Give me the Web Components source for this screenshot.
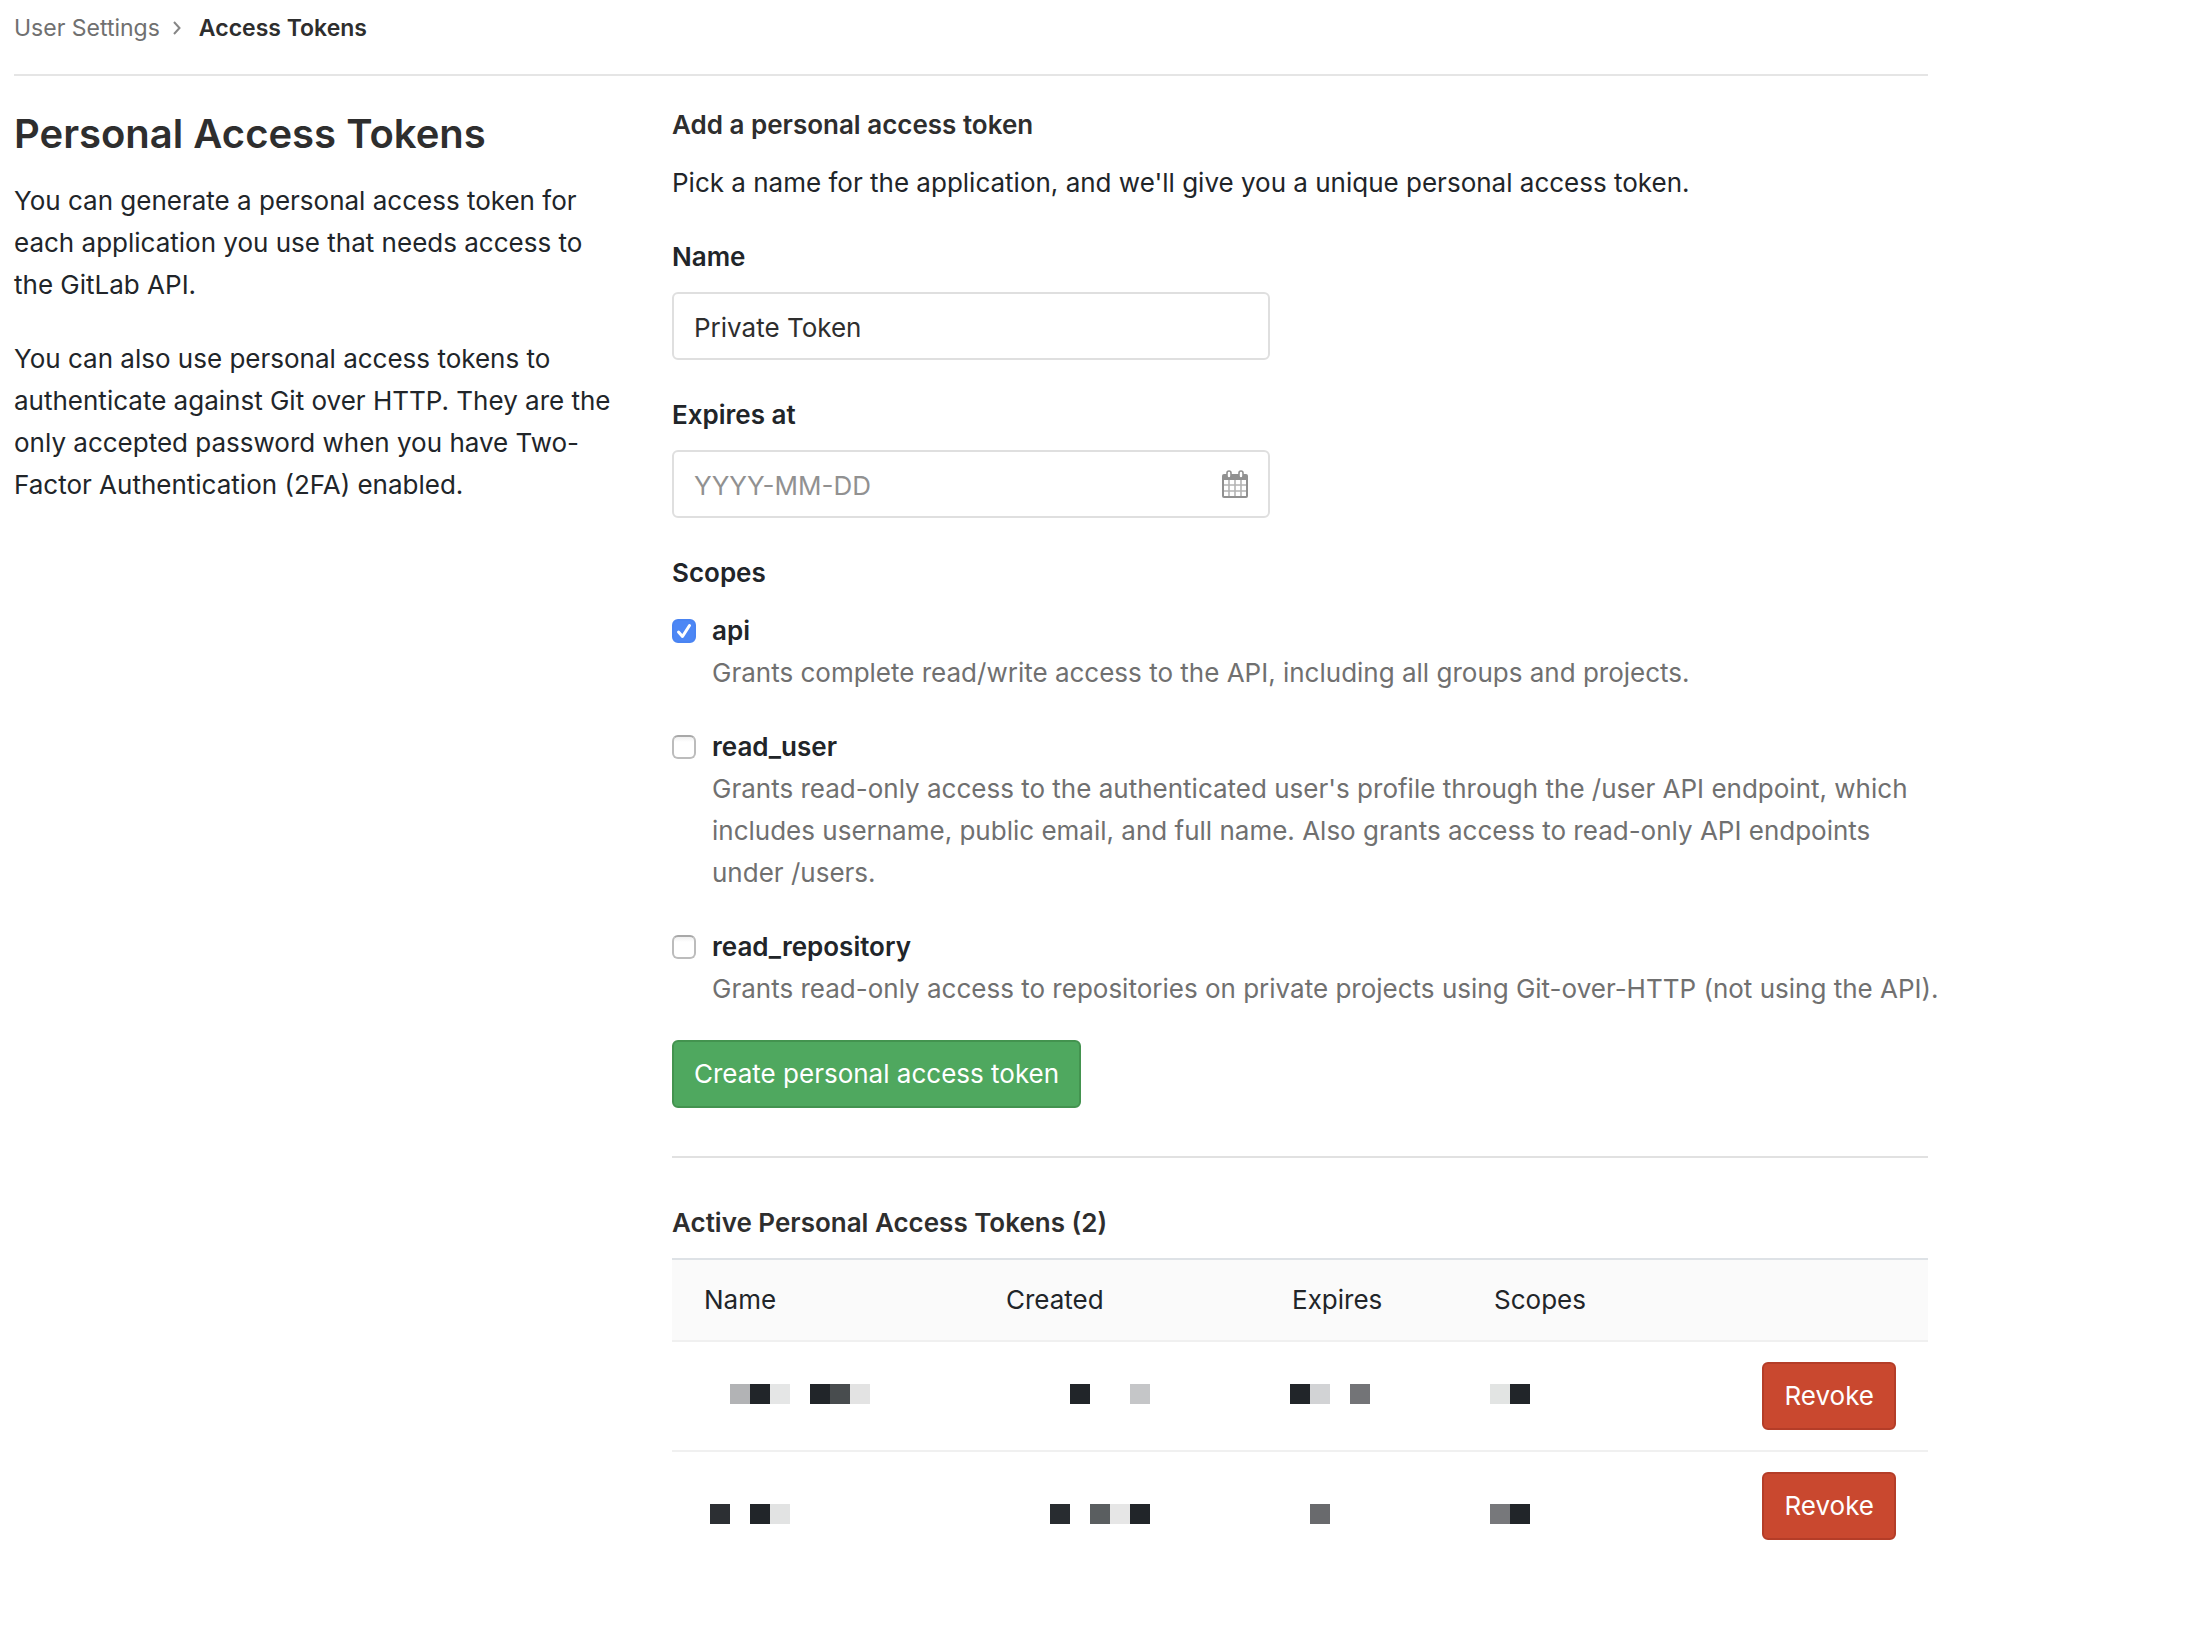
<!DOCTYPE html>
<html lang="en">
<head>
<meta charset="utf-8">
<meta name="viewport" content="width=device-width, initial-scale=1">
<title>Access Tokens · User Settings</title>
<style>
  :root {
    --text: #212529;
    --heading: #2e2e2e;
    --muted: #707070;
    --line: #e1e1e1;
    --size: 26px;
    --leading: 42px;
  }
  body {
    margin: 0;
    background: #fff;
    color: var(--text);
    font: 400 var(--size)/var(--leading) Inter, "Liberation Sans", sans-serif;
  }
</style>
</head>
<body>
<token-settings></token-settings>

<script>
const component = (name, markup, setup) => {
  const template = document.createElement('template');
  template.innerHTML = markup;
  customElements.define(name, class extends HTMLElement {
    constructor() {
      super();
      this.attachShadow({ mode: 'open' }).append(template.content.cloneNode(true));
    }
    connectedCallback() {
      if (setup) setup(this, this.shadowRoot);
    }
  });
};

/* Breadcrumb trail with a rule under it */
component('bread-crumbs', `
  <style>
    :host { display: block; border-bottom: 2px solid #e5e5e5; padding: 12px 0 30px; }
    nav { display: flex; align-items: center; font-size: 23px; line-height: 32px; }
    a { color: var(--muted); text-decoration: none; }
    svg { width: 8px; height: 14px; margin: 0 18px 0 13px; fill: none; stroke: #868686; stroke-width: 2; }
    strong { font-weight: 600; color: var(--heading); }
  </style>
  <nav aria-label="Breadcrumb">
    <a href="#profile"><slot name="parent"></slot></a>
    <svg viewBox="0 0 8 14" aria-hidden="true"><path d="M1 1l5.5 6L1 13"/></svg>
    <strong><slot></slot></strong>
  </nav>`);

component('app-button', `
  <style>
    :host { display: inline-block; vertical-align: top; --fill: #4fa85f; --edge: #43934f; }
    :host([variant="danger"]) { --fill: #c9482f; --edge: #b43d28; }
    button {
      display: block; box-sizing: border-box; height: 68px; margin: 0; padding: 0 20px;
      border: 2px solid var(--edge); border-radius: 6px; background: var(--fill);
      color: #fff; font: inherit; cursor: pointer; white-space: nowrap;
    }
  </style>
  <button type="button"><slot></slot></button>`);

/* Labelled text box; the icon attribute adds the calendar */
component('form-field', `
  <style>
    :host { display: flex; flex-direction: column; gap: 14px; }
    label { font-weight: 600; }
    .box {
      display: flex; align-items: center; box-sizing: border-box; height: 68px;
      padding: 0 20px; border: 2px solid #dfdfdf; border-radius: 6px; background: #fff;
    }
    input {
      flex: 1; min-width: 0; padding: 4px 0 0; border: 0; outline: 0; background: none;
      color: var(--heading); font: inherit;
    }
    input::placeholder { color: #919191; opacity: 1; }
    svg { display: none; width: 26px; height: 28px; }
    :host([icon]) svg { display: block; }
  </style>
  <label for="control"></label>
  <div class="box">
    <input id="control" type="text">
    <svg viewBox="0 0 26 28" aria-hidden="true">
      <path d="M2 4H24a2 2 0 0 1 2 2V26a2 2 0 0 1-2 2H2a2 2 0 0 1-2-2V6a2 2 0 0 1 2-2z" fill="#919191"/>
      <rect x="2" y="10" width="22" height="16" fill="#fff"/>
      <path d="M7 10V26M13 10V26M19 10V26M2 15H24M2 21H24" stroke="#b4b4b4" stroke-width="1.6"/>
      <rect x="5" y="1" width="4" height="7" rx="2" fill="#fff" stroke="#919191" stroke-width="1.6"/>
      <rect x="17" y="1" width="4" height="7" rx="2" fill="#fff" stroke="#919191" stroke-width="1.6"/>
    </svg>
  </div>`, (host, root) => {
  root.querySelector('label').textContent = host.getAttribute('label');
  const input = root.querySelector('input');
  input.value = host.getAttribute('value') || '';
  input.placeholder = host.getAttribute('placeholder') || '';
});

component('scope-option', `
  <style>
    :host { display: grid; grid-template-columns: 24px minmax(0, 1fr); column-gap: 16px; }
    .tick { display: grid; width: 24px; height: 24px; align-self: center; }
    .tick > * { grid-area: 1 / 1; }
    input {
      appearance: none; box-sizing: border-box; width: 24px; height: 24px; margin: 0;
      border: 2px solid #bcbcbc; border-top-color: #a8a8a8; border-radius: 6px;
      background: linear-gradient(#f0f0f0, #fff 5px);
    }
    input:checked { border-color: #4a84f2; background: #4d87f5; }
    svg { width: 24px; height: 24px; fill: none; stroke: #fff; stroke-width: 3; stroke-linecap: round; stroke-linejoin: round; pointer-events: none; visibility: hidden; }
    input:checked + svg { visibility: visible; }
    label { font-weight: 600; }
    p { grid-column: 2; margin: 0 -14px 0 0; color: var(--muted); }
  </style>
  <span class="tick">
    <input id="scope" type="checkbox" aria-describedby="about">
    <svg viewBox="0 0 24 24" aria-hidden="true"><path d="M6.5 13l4 4.500L17.500 6.500"/></svg>
  </span>
  <label for="scope"></label>
  <p id="about"><slot></slot></p>`, (host, root) => {
  root.querySelector('label').textContent = host.getAttribute('name');
  root.querySelector('input').checked = host.hasAttribute('checked');
});

/* A value hidden behind 20px blocks: blocks="x:colour x:colour", drop = top edge in the row */
component('masked-value', `
  <style>
    :host { display: block; height: 68px; }
    svg { display: block; width: 100%; height: 68px; overflow: visible; }
  </style>
  <svg aria-hidden="true"></svg>`, (host, root) => {
  root.querySelector('svg').innerHTML = host.getAttribute('blocks').split(' ').map(block => {
    const [x, colour] = block.split(':');
    return `<rect x="${x}" y="${host.getAttribute('drop')}" width="20" height="20" fill="${colour}"/>`;
  }).join('');
});

component('token-table', `
  <style>
    :host { display: block; }
    table { width: 100%; table-layout: fixed; border-collapse: separate; border-spacing: 0; border-top: 2px solid #dee2e6; }
    .name { width: 302px; } .created { width: 286px; } .expires { width: 202px; }
    th { padding: 19px 32px; background: #fafafa; font-weight: 400; text-align: left; }
    td { padding: 20px 32px; vertical-align: top; }
    th, tr:not(:last-child) td { border-bottom: 2px solid #f0f0f0; }
    td:last-child { text-align: right; }
  </style>
  <table>
    <colgroup><col class="name"><col class="created"><col class="expires"><col><col></colgroup>
    <thead>
      <tr><th scope="col">Name</th><th scope="col">Created</th><th scope="col">Expires</th><th scope="col">Scopes</th><th></th></tr>
    </thead>
    <tbody>
      <tr>
        <td><masked-value drop="22" blocks="26:#b2b3b5 46:#212529 66:#e5e6e6 106:#212529 126:#484c4e 146:#e3e3e3"></masked-value></td>
        <td><masked-value drop="22" blocks="64:#212529 124:#c5c6c8"></masked-value></td>
        <td><masked-value drop="22" blocks="-2:#212529 18:#d2d3d5 58:#737477"></masked-value></td>
        <td><masked-value drop="22" blocks="-4:#e2e4e3 16:#212529"></masked-value></td>
        <td><app-button variant="danger">Revoke</app-button></td>
      </tr>
      <tr>
        <td><masked-value drop="32" blocks="6:#2c2f33 46:#212529 66:#e2e3e3"></masked-value></td>
        <td><masked-value drop="32" blocks="44:#282c30 84:#5a5e60 104:#e6e6e6 124:#212529"></masked-value></td>
        <td><masked-value drop="32" blocks="18:#696a6d"></masked-value></td>
        <td><masked-value drop="32" blocks="-4:#77787b 16:#212529"></masked-value></td>
        <td><app-button variant="danger">Revoke</app-button></td>
      </tr>
    </tbody>
  </table>`);

component('token-settings', `
  <style>
    :host { display: block; box-sizing: border-box; max-width: 1942px; padding: 0 14px 72px; }
    .columns { display: grid; grid-template-columns: repeat(12, minmax(0, 1fr)); column-gap: 60px; }
    aside { grid-column: span 4; padding-top: 34px; }
    main { grid-column: span 8; padding-top: 28px; }
    h1, h2, p { margin: 0; }
    h1 { margin-bottom: 22px; color: var(--heading); font-size: 40px; line-height: 48px; font-weight: 600; }
    h2 { color: var(--heading); font-size: inherit; font-weight: 600; }
    aside p + p { margin-top: 32px; }
    .intro { display: grid; gap: 16px; }
    .fields { display: grid; gap: 34px; width: calc(50% - 30px); margin: 32px 0 34px; }
    fieldset { display: grid; gap: 32px; min-width: 0; margin: 0 0 30px; padding: 0; border: 0; }
    legend { padding: 0 0 16px; font-weight: 600; }
    hr { height: 2px; margin: 48px 0 44px; border: 0; background: var(--line); }
    token-table { margin-top: 14px; }
  </style>
  <bread-crumbs><span slot="parent">User Settings</span>Access Tokens</bread-crumbs>
  <div class="columns">
    <aside>
      <h1>Personal Access Tokens</h1>
      <p>You can generate a personal access token for each application you use that needs access to the GitLab API.</p>
      <p>You can also use personal access tokens to authenticate against Git over HTTP. They are the only accepted password when you have Two-Factor Authentication (2FA) enabled.</p>
    </aside>
    <main>
      <form>
        <div class="intro">
          <h2>Add a personal access token</h2>
          <p>Pick a name for the application, and we'll give you a unique personal access token.</p>
        </div>
        <div class="fields">
          <form-field label="Name" value="Private Token"></form-field>
          <form-field label="Expires at" placeholder="YYYY-MM-DD" icon></form-field>
        </div>
        <fieldset>
          <legend>Scopes</legend>
          <scope-option name="api" checked>Grants complete read/write access to the API, including all groups and projects.</scope-option>
          <scope-option name="read_user">Grants read-only access to the authenticated user's profile through the /user API endpoint, which includes username, public email, and full name. Also grants access to read-only API endpoints under /users.</scope-option>
          <scope-option name="read_repository">Grants read-only access to repositories on private projects using Git-over-HTTP (not using the API).</scope-option>
        </fieldset>
        <app-button>Create personal access token</app-button>
      </form>
      <hr>
      <h2>Active Personal Access Tokens (2)</h2>
      <token-table></token-table>
    </main>
  </div>`);
</script>
</body>
</html>
